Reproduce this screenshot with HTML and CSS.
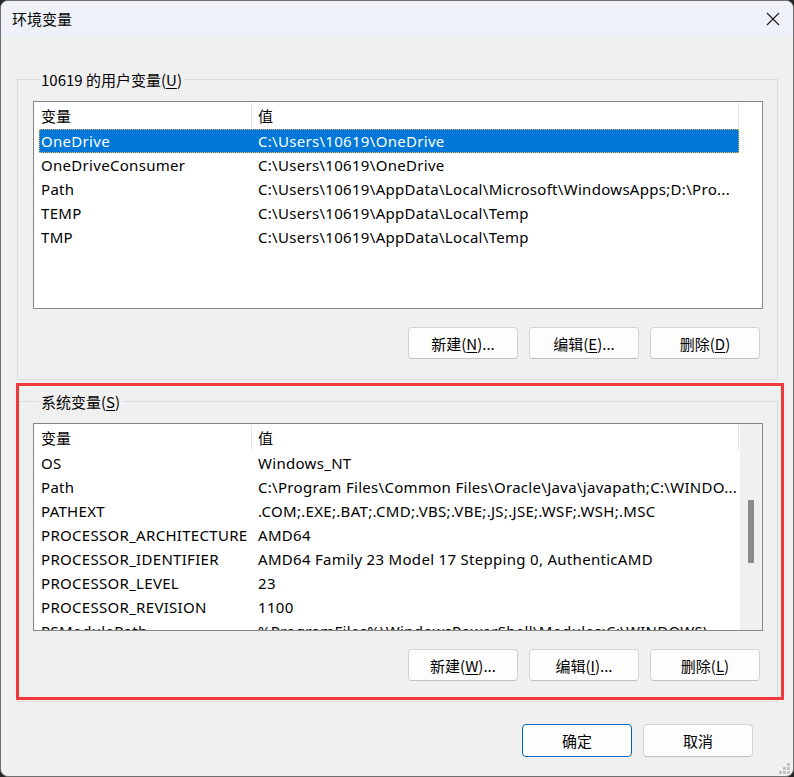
FILE: index.html
```html
<!DOCTYPE html>
<html lang="zh-CN">
<head>
<meta charset="utf-8">
<title>环境变量</title>
<link rel="stylesheet" href="styles.css">
</head>
<body>
<div class="window">
  <div class="titlebar">
    <span class="title">环境变量</span>
    <span class="close">
      <svg width="14" height="14" viewBox="0 0 14 14"><path d="M1 1 L13 13 M13 1 L1 13" stroke="#1a1a1a" stroke-width="1.1" fill="none"/></svg>
    </span>
  </div>
  <div class="content">
    <section class="group">
      <div class="group-title">10619 的用户变量(<u>U</u>)</div>
      <div class="list">
        <div class="list-main">
          <div class="list-head"><div class="hcell h1">变量</div><div class="hcell h2">值</div></div>
          <div class="row selected"><span class="c1">OneDrive</span><span class="c2">C:\Users\10619\OneDrive</span></div>
          <div class="row"><span class="c1">OneDriveConsumer</span><span class="c2">C:\Users\10619\OneDrive</span></div>
          <div class="row"><span class="c1">Path</span><span class="c2">C:\Users\10619\AppData\Local\Microsoft\WindowsApps;D:\Pro...</span></div>
          <div class="row"><span class="c1">TEMP</span><span class="c2">C:\Users\10619\AppData\Local\Temp</span></div>
          <div class="row"><span class="c1">TMP</span><span class="c2">C:\Users\10619\AppData\Local\Temp</span></div>
        </div>
      </div>
      <div class="btns">
        <button class="btn">新建(<u>N</u>)...</button>
        <button class="btn">编辑(<u>E</u>)...</button>
        <button class="btn">删除(<u>D</u>)</button>
      </div>
    </section>
    <section class="group group-sys">
      <div class="group-title">系统变量(<u>S</u>)</div>
      <div class="list">
        <div class="list-main">
          <div class="list-head"><div class="hcell h1">变量</div><div class="hcell h2">值</div></div>
          <div class="row"><span class="c1">OS</span><span class="c2">Windows_NT</span></div>
          <div class="row"><span class="c1">Path</span><span class="c2">C:\Program Files\Common Files\Oracle\Java\javapath;C:\WINDO...</span></div>
          <div class="row"><span class="c1">PATHEXT</span><span class="c2">.COM;.EXE;.BAT;.CMD;.VBS;.VBE;.JS;.JSE;.WSF;.WSH;.MSC</span></div>
          <div class="row"><span class="c1">PROCESSOR_ARCHITECTURE</span><span class="c2">AMD64</span></div>
          <div class="row"><span class="c1">PROCESSOR_IDENTIFIER</span><span class="c2">AMD64 Family 23 Model 17 Stepping 0, AuthenticAMD</span></div>
          <div class="row"><span class="c1">PROCESSOR_LEVEL</span><span class="c2">23</span></div>
          <div class="row"><span class="c1">PROCESSOR_REVISION</span><span class="c2">1100</span></div>
          <div class="row"><span class="c1">PSModulePath</span><span class="c2">%ProgramFiles%\WindowsPowerShell\Modules;C:\WINDOWS\...</span></div>
        </div>
        <div class="scrollbar"><div class="thumb"></div></div>
      </div>
      <div class="btns">
        <button class="btn">新建(<u>W</u>)...</button>
        <button class="btn">编辑(<u>I</u>)...</button>
        <button class="btn">删除(<u>L</u>)</button>
      </div>
    </section>
    <div class="footer">
      <button class="btn primary">确定</button>
      <button class="btn">取消</button>
    </div>
  </div>
  <div class="annotation"></div>
  <svg class="grip" width="12" height="12" viewBox="0 0 12 12">
    <g fill="#c4c4c4">
      <rect x="8" y="0" width="3" height="3"/>
      <rect x="4" y="4" width="3" height="3"/>
      <rect x="8" y="4" width="3" height="3"/>
      <rect x="0" y="8" width="3" height="3"/>
      <rect x="4" y="8" width="3" height="3"/>
      <rect x="8" y="8" width="3" height="3"/>
    </g>
  </svg>
</div>
</body>
</html>
```
FILE: styles.css
```css
* { box-sizing: border-box; }
html, body {
  margin: 0;
  padding: 0;
  background: #262626;
}
body {
  font-family: "Noto Sans", "Noto Sans CJK SC", sans-serif;
  font-size: 15px;
  color: #000;
}
.window {
  position: relative;
  width: 794px;
  height: 777px;
  background: #f0f0f0;
  border: 1px solid #707070;
  border-radius: 8px;
  overflow: hidden;
}
.titlebar {
  height: 36px;
  background: #eef2f8;
  display: flex;
  align-items: center;
  padding: 0 13px 0 11px;
}
.title {
  font-family: "Noto Sans CJK SC", sans-serif;
  font-size: 15px;
  line-height: 36px;
}
.close {
  margin-left: auto;
  display: flex;
  align-items: center;
}
.content {
  padding: 42px 15px 0 16px;
}
.group {
  border: 1px solid #dcdcdc;
  padding: 0 14px 20px 15px;
}
.group-sys {
  margin-top: 21px;
}
.group-title {
  margin-top: -11px;
  margin-left: 6px;
  padding: 0 2px;
  width: fit-content;
  line-height: 22px;
  background: #f0f0f0;
  font-family: "Noto Sans CJK SC", sans-serif;
}
.group-title u, .btn u { text-underline-offset: 2px; }
.list {
  margin-top: 10px;
  height: 208px;
  border: 1px solid #868686;
  background: #fff;
  overflow: hidden;
  display: flex;
}
.list-main {
  flex: 1;
  min-width: 0;
}
.list-head {
  display: flex;
  height: 27px;
}
.hcell {
  font-family: "Noto Sans CJK SC", sans-serif;
  border-right: 1px solid #e6e6e6;
  margin: 1px 0 1px;
  line-height: 25px;
}
.h1 { width: 218px; padding-left: 7px; }
.h2 { width: 487px; padding-left: 6px; }
.row {
  display: flex;
  margin-left: 5px;
  width: 700px;
  height: 24px;
  line-height: 24px;
  white-space: nowrap;
  letter-spacing: 0.3px;
}
.row .c1 {
  width: 212px;
  padding-left: 2px;
  overflow: hidden;
}
.row .c2 {
  width: 488px;
  padding-left: 7px;
  overflow: hidden;
}
.row.selected {
  background: #0078d7;
  color: #fff;
  outline: 1px dotted #f0b050;
  outline-offset: -1px;
}
.scrollbar {
  width: 22px;
  background: #f0f0f0;
  display: flex;
  justify-content: center;
}
.thumb {
  width: 6px;
  height: 63px;
  margin-top: 76px;
  background: #8a8a8a;
  border-radius: 1px;
}
.btns {
  display: flex;
  justify-content: flex-end;
  gap: 11px;
  margin-top: 18px;
  padding-right: 3px;
}
.btn {
  width: 110px;
  height: 32px;
  background: #fdfdfd;
  border: 1px solid #d3d3d3;
  border-bottom-color: #c2c2c2;
  border-radius: 4px;
  font-family: "Noto Sans CJK SC", sans-serif;
  font-size: 15px;
  color: #000;
  padding: 0;
}
.footer {
  display: flex;
  justify-content: flex-end;
  gap: 11px;
  margin-top: 22px;
  padding-right: 25px;
}
.footer .btn { height: 33px; }
.btn.primary {
  border-color: #0067c0;
}
.annotation {
  position: absolute;
  left: 15px;
  top: 382px;
  width: 768px;
  height: 317px;
  border: 3px solid #ee3a3a;
  pointer-events: none;
}
.grip {
  position: absolute;
  right: 2px;
  bottom: 1px;
}
```
